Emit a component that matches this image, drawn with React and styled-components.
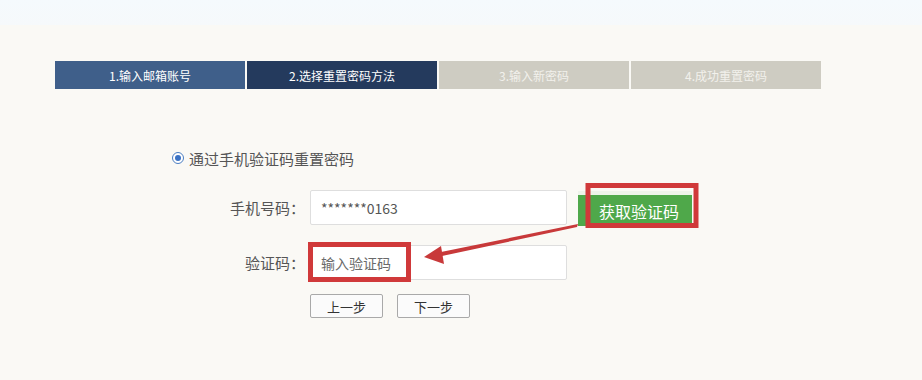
import React from "react";
import styled, { createGlobalStyle } from "styled-components";

const Global = createGlobalStyle`
  html, body { margin: 0; padding: 0; }
  body {
    background: #faf9f5;
    font-family: "Microsoft YaHei", "Noto Sans CJK SC", "Noto Sans", sans-serif;
    width: 922px;
    height: 380px;
    overflow: hidden;
  }
`;

const Page = styled.div`
  position: relative;
  width: 922px;
  height: 380px;
  background: #faf9f5;
`;

const TopBand = styled.div`
  height: 25px;
  background: linear-gradient(#f5fafd, #f6f9fb);
`;

const Steps = styled.div`
  display: flex;
  gap: 2px;
  margin: 36px 0 0 55px;
  width: 766px;
  height: 28px;
`;

const Step = styled.div`
  flex: 1;
  display: flex;
  align-items: center;
  justify-content: center;
  font-size: 12px;
  color: ${(p) => (p.$state === "todo" ? "#f2f1ec" : "#ffffff")};
  background: ${(p) =>
    p.$state === "done" ? "#3f5f8a" : p.$state === "active" ? "#243a5d" : "#ceccc2"};
`;

const Form = styled.div`
  display: flex;
  flex-direction: column;
  margin-top: 58px;
`;

const RadioLine = styled.label`
  display: flex;
  align-items: center;
  gap: 5px;
  margin-left: 172px;
  font-size: 15px;
  color: #555;
  height: 22px;
`;

const Radio = styled.span`
  width: 10px;
  height: 10px;
  border-radius: 50%;
  border: 1px solid #4a7ec2;
  background: #fff;
  display: flex;
  align-items: center;
  justify-content: center;
  &::after {
    content: "";
    width: 6px;
    height: 6px;
    border-radius: 50%;
    background: #3a72c4;
  }
`;

const Row = styled.div`
  display: flex;
  align-items: center;
  margin-top: ${(p) => p.$top}px;
  height: 35px;
`;

const Label = styled.div`
  width: 310px;
  text-align: right;
  padding-right: 5px;
  box-sizing: border-box;
  font-size: 15px;
  color: #555;
`;

const Input = styled.div`
  width: 257px;
  height: 35px;
  box-sizing: border-box;
  background: #fff;
  border: 1px solid #dedede;
  border-radius: 2px;
  display: flex;
  align-items: center;
  padding-left: 10px;
  font-size: 14px;
  color: ${(p) => (p.$placeholder ? "#6a6a6a" : "#555")};
`;

const GreenButton = styled.div`
  margin-left: 11px;
  width: 114px;
  height: 35px;
  margin-top: 2px;
  background: #4fa84a;
  color: #fff;
  font-size: 16px;
  display: flex;
  align-items: center;
  justify-content: center;
  padding-left: 8px;
  box-sizing: border-box;
  border-top: 4px solid #eef3ea;
`;

const Buttons = styled.div`
  display: flex;
  gap: 14px;
  margin: 14px 0 0 310px;
`;

const Btn = styled.div`
  width: 73px;
  height: 24px;
  box-sizing: border-box;
  border: 1px solid #a9a9a9;
  border-radius: 2px;
  background: #fbfbfb;
  color: #333;
  font-size: 13px;
  display: flex;
  align-items: center;
  justify-content: center;
`;

const Annot = styled.svg`
  position: absolute;
  left: 0;
  top: 0;
  pointer-events: none;
`;

export default function App() {
  return (
    <Page>
      <Global />
      <TopBand />
      <Steps>
        <Step $state="done">1.输入邮箱账号</Step>
        <Step $state="active">2.选择重置密码方法</Step>
        <Step $state="todo">3.输入新密码</Step>
        <Step $state="todo">4.成功重置密码</Step>
      </Steps>
      <Form>
        <RadioLine>
          <Radio />
          通过手机验证码重置密码
        </RadioLine>
        <Row $top={21}>
          <Label>手机号码：</Label>
          <Input>*******0163</Input>
          <GreenButton>获取验证码</GreenButton>
        </Row>
        <Row $top={20}>
          <Label>验证码：</Label>
          <Input $placeholder>输入验证码</Input>
        </Row>
        <Buttons>
          <Btn>上一步</Btn>
          <Btn>下一步</Btn>
        </Buttons>
      </Form>
      <Annot width="922" height="380" viewBox="0 0 922 380">
        <rect x="588" y="185.5" width="108" height="40" fill="none" stroke="#d0393a" strokeWidth="5" />
        <rect x="310.5" y="244.5" width="98" height="35" fill="none" stroke="#d0393a" strokeWidth="5" />
        <polygon points="578,224 577,227 442,256 441,252" fill="#c8393a" />
        <polygon points="424,257 441,246 444,264" fill="#c8393a" />
      </Annot>
    </Page>
  );
}
